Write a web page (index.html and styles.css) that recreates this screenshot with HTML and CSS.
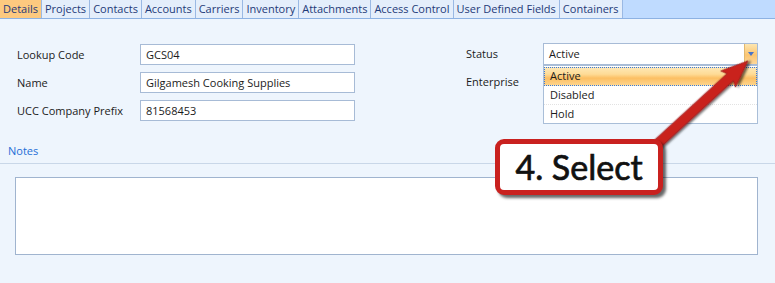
FILE: index.html
```html
<!DOCTYPE html>
<html lang="en">
<head>
    <meta charset="UTF-8">
    <title>Account Details</title>
    <link rel="stylesheet" href="styles.css">
</head>
<body>
    <div class="tabs">
        <span class="tab active">Details</span>
        <span class="tab">Projects</span>
        <span class="tab">Contacts</span>
        <span class="tab">Accounts</span>
        <span class="tab">Carriers</span>
        <span class="tab">Inventory</span>
        <span class="tab">Attachments</span>
        <span class="tab">Access Control</span>
        <span class="tab">User Defined Fields</span>
        <span class="tab">Containers</span>
    </div>

    <div class="form">
        <div class="fields">
            <label>Lookup Code</label>
            <div class="input">GCS04</div>
            <label>Name</label>
            <div class="input">Gilgamesh Cooking Supplies</div>
            <label>UCC Company Prefix</label>
            <div class="input">81568453</div>
        </div>

        <div class="fields right">
            <label>Status</label>
            <div class="combo">
                <span class="combo-text">Active</span>
                <span class="combo-btn"><i class="caret"></i></span>
                <!-- open dropdown list -->
                <ul class="dropdown">
                    <li class="selected">Active</li>
                    <li>Disabled</li>
                    <li>Hold</li>
                </ul>
            </div>
            <label>Enterprise</label>
            <div></div>
        </div>
    </div>

    <div class="notes-head">Notes</div>
    <div class="notes"></div>

    <!-- annotation overlay -->
    <svg class="arrow" width="775" height="283" viewBox="0 0 775 283">
        <defs>
            <filter id="shadow" x="-20%" y="-20%" width="140%" height="140%">
                <feDropShadow dx="2" dy="2" stdDeviation="1.2" flood-color="#000" flood-opacity="0.6"/>
            </filter>
        </defs>
        <polygon transform="translate(655,146) rotate(-42.5)"
                 points="0,-4.8 102,-4.8 99,-11 126,0 99,11 102,4.8 0,4.8"
                 fill="#c9211f" stroke="#8e1512" stroke-width="0.6" filter="url(#shadow)"/>
    </svg>
    <div class="callout">4. Select</div>
</body>
</html>
```

FILE: styles.css
```css
body {
    margin: 0;
    position: relative;
    background-color: #eef5fd;
    font-family: "Open Sans", "Noto Sans", sans-serif;
    font-size: 11px;
    color: #1b1b1b;
    height: 283px;
    overflow: hidden;
}

/* tab strip */
.tabs {
    display: flex;
    height: 18px;
    background-color: #bfdbff;
    border-bottom: 1px solid #8db2e3;
}
.tab {
    padding: 0 3px;
    line-height: 18px;
    color: #1e3a78;
    background-color: #e4eefb;
    border-right: 1px solid #9ab9e4;
    white-space: nowrap;
}
.tab.active {
    background-color: #fdc97f;
}

/* form fields */
.form {
    display: flex;
    gap: 111px;
    padding: 25px 0 0 17px;
}
.fields {
    display: grid;
    grid-template-columns: 123px 215px;
    grid-auto-rows: 21px;
    row-gap: 7px;
    align-items: center;
}
.fields.right {
    grid-template-columns: 77px 215px;
    margin-top: -1px;
}
.input {
    height: 21px;
    box-sizing: border-box;
    padding-left: 5px;
    line-height: 19px;
    background-color: #fff;
    border: 1px solid #a7bbd6;
}
.combo {
    position: relative;
    display: flex;
    height: 22px;
    box-sizing: border-box;
    background-color: #fff;
    border: 1px solid #a7bbd6;
}
.combo-text {
    flex: 1;
    padding-left: 5px;
    line-height: 20px;
}
.combo-btn {
    width: 12px;
    display: flex;
    align-items: center;
    justify-content: center;
    border-left: 1px solid #e0b870;
    background: linear-gradient(#fde6b0, #fcc570 55%, #fdd79a);
}
.caret {
    width: 0;
    height: 0;
    border-left: 3.5px solid transparent;
    border-right: 3.5px solid transparent;
    border-top: 4px solid #4a74c8;
}
.dropdown {
    position: absolute;
    top: 21px;
    left: -1px;
    right: -1px;
    margin: 0;
    padding: 1px 0 0;
    list-style: none;
    background-color: #fff;
    border: 1px solid #a9bed8;
    z-index: 2;
}
.dropdown li {
    height: 18px;
    line-height: 18px;
    padding-left: 6px;
    border-bottom: 1px dotted #e2e2e2;
}
.dropdown li:last-child {
    border-bottom: none;
}
.dropdown li.selected {
    outline: 1px dotted #3a78d8;
    outline-offset: -1px;
    background: linear-gradient(#fee9b8 0%, #fedb96 40%, #fcbf63 62%, #fdd38b 100%);
}

/* notes */
.notes-head {
    margin-top: 23px;
    padding: 0 0 5px 8px;
    line-height: 14px;
    color: #1e6ed6;
    border-bottom: 1px solid #c9d7e8;
}
.notes {
    height: 76px;
    margin: 13px 17px 0 15px;
    background-color: #fff;
    border: 1px solid #a0b4cf;
}

/* annotation */
.arrow {
    position: absolute;
    top: 0;
    left: 0;
    z-index: 3;
}
.callout {
    position: absolute;
    left: 495px;
    top: 139px;
    width: 168px;
    height: 56px;
    box-sizing: border-box;
    border: 5px solid #c9211f;
    border-radius: 9px;
    background-color: #fff;
    box-shadow: 3px 3px 3px rgba(0, 0, 0, 0.6);
    font-family: Lato, sans-serif;
    font-weight: 400;
    font-size: 34px;
    -webkit-text-stroke: 0.7px #111;
    line-height: 45px;
    text-align: center;
    color: #111;
    z-index: 4;
}
```
